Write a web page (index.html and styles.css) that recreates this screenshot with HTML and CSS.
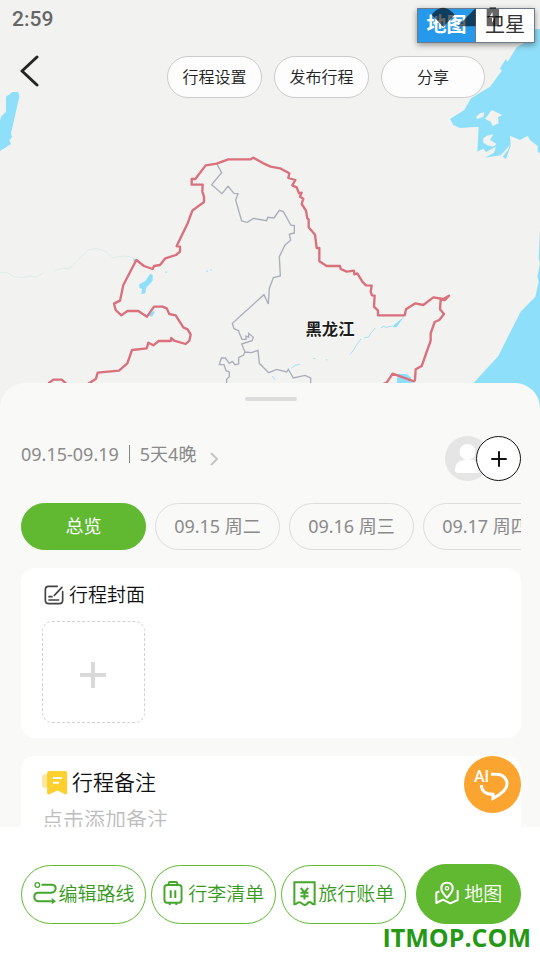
FILE: index.html
```html
<!DOCTYPE html>
<html lang="zh-CN">
<head>
    <meta charset="UTF-8">
    <meta name="viewport" content="width=device-width, initial-scale=1.0">
    <title>行程总览</title>
    <link rel="stylesheet" href="styles.css">
</head>
<body>
    <div class="app">
        <header class="map-area">
            <svg class="map" viewBox="0 0 1620 1230" preserveAspectRatio="xMidYMin slice" aria-hidden="true">
                <!-- water -->
                <g fill="#8edff9">
                    <path d="M18 290L38 276H55L58 290L33 400L36 412L28 420L33 432L0 453V360L5 348L18 335Z"/>
                    <path d="M1620 87L1600 88L1580 125L1550 142L1523 185L1517 178L1500 205L1505 213L1470 260L1413 295L1393 330L1350 357L1360 375L1380 384L1436 380L1432 455L1450 446L1458 456L1488 440L1482 458L1455 473L1502 466L1530 435L1524 450L1508 470L1518 477L1532 437L1530 407L1560 420L1583 407L1590 420L1613 438V455L1620 460Z"/>
                    <path d="M1620 690L1616 775L1620 790L1612 830L1616 845L1606 890L1562 935L1495 1068L1420 1150V1230H1620Z"/>
                    <path d="M418 853L436 843L450 822L458 824V842L438 864L436 880L424 882L426 866L418 864Z"/>
                    <path d="M445 946L460 932L464 938L456 950Z"/>
                    <path d="M400 773L408 780L401 788Z"/>
                    <path d="M1192 1122H1220L1232 1132L1240 1160H1190Z"/>
                    <path d="M1212 950L1190 981L1178 982L1182 974Z"/>
                </g>
                <g fill="#f2f2f0">
                    <path d="M1428 352L1440 340L1453 337L1450 350L1432 357Z"/>
                    <path d="M1455 357L1475 330L1507 345L1494 352L1496 370L1478 378L1472 365Z"/>
                    <path d="M1450 415L1460 407L1480 403L1470 420L1490 432L1480 440L1462 436L1450 428Z"/>
                </g>
                <!-- rivers -->
                <path class="river" d="M1178 978L1158 982L1150 979L1142 984M1126 984L1112 1000L1106 1011L1092 1014M1084 1016L1070 1034L1060 1052L1050 1063M940 1075L947 1076M978 1078L982 1080M900 1093L885 1096L874 1105M495 816L502 817M618 814L624 813M631 811L636 809M816 1128L826 1140"/>
                <path class="stream" d="M0 818L20 817L40 830L70 832L95 828L110 832L130 817M165 811L190 805H210L230 783L265 750L290 745L318 755L340 773L370 768L400 772"/>
                <!-- inner boundaries -->
                <path class="inner" d="M650 491L665 518L635 554L666 581L684 559L702 580L714 581L707 600L725 663L742 667L760 655L800 662L803 652L822 654L838 631L850 635L873 676H883V699L868 703L872 721L855 735L838 770L841 828L820 833L808 865L805 912L792 884L697 970L702 986L716 992L718 1000L726 1018H738V1008L746 1012V1000L760 1012L756 1022L725 1032L735 1056L730 1066L716 1072V1092L705 1094L697 1084L688 1090L676 1074H664L658 1094L672 1094L678 1112L688 1116V1130L680 1138V1170M735 1056L755 1058L774 1051L778 1090L806 1118L830 1108L860 1116L865 1108L880 1134L915 1126L932 1134V1170"/>
                <!-- border -->
                <path class="border" d="M145 1150L160 1139H185L198 1150M258 1156L288 1136L293 1118L357 1112L382 1090L396 1050L440 1045L445 1028L460 1036L476 1023H512L514 1014L522 1022L557 1032L568 1022L572 1004L563 988L550 982L527 946L508 942L500 925L488 920H462L441 950L415 933H382L364 946L347 930L342 911L360 902L370 855L409 780L432 798L458 807L462 798L480 795L496 775L528 765L540 755V740L530 738L563 670L577 632L612 606V590L607 575L608 554H575V537H586L617 496L650 491L685 478H752L760 473L790 490L812 500L840 505L868 520L865 534L886 540L877 556L890 562L897 580L905 578L900 590L910 596L905 612L918 632L922 655L926 658V682L945 704L950 744H958V784L980 798H1020L1022 807L1040 815L1062 812L1063 823L1072 820L1087 845L1098 856L1115 857L1112 875L1116 886L1124 887L1122 920L1134 932V946H1214L1218 928L1246 910L1270 915L1300 892L1330 897L1347 887L1335 900L1322 899L1320 928L1332 942L1318 960L1304 966L1292 1000V1022L1265 1098L1247 1108L1245 1140L1242 1144L1178 1121L1160 1148L1140 1156"/>
                <text class="province" x="990" y="1005" text-anchor="middle">黑龙江</text>
            </svg>

            <div class="status-bar">
                <span class="time">2:59</span>
                <div class="map-type">
                    <button type="button" class="active">地图</button>
                    <button type="button">卫星</button>
                    <svg class="status-icons" viewBox="0 0 204 60" aria-hidden="true">
                        <path d="M2 23Q36-19 71 23L37 60Z"/>
                        <path d="M80 58L134 3V58Z"/>
                        <path fill-rule="evenodd" d="M167 6H176V1H195V6H204V54Q204 58 200 58H171Q167 58 167 54ZM184 15L174 33H183V47L194 27H185Z"/>
                    </svg>
                </div>
            </div>

            <div class="toolbar">
                <button type="button" class="back" aria-label="返回">
                    <svg viewBox="0 0 20 32" width="20" height="32" aria-hidden="true"><path d="M17 2L2 16L17 30" fill="none" stroke="#252525" stroke-width="3" stroke-linecap="round" stroke-linejoin="round"/></svg>
                </button>
                <div class="actions">
                    <button type="button">行程设置</button>
                    <button type="button">发布行程</button>
                    <button type="button" class="share">分享</button>
                </div>
            </div>
        </header>

        <main class="sheet">
            <div class="handle"></div>

            <div class="trip-row">
                <a href="#dates" class="trip-dates">
                    <span>09.15-09.19</span>
                    <span class="divider"></span>
                    <span>5天4晚</span>
                    <svg class="arrow" viewBox="0 0 8 14" width="8" height="14" aria-hidden="true"><path d="M1 1L7 7L1 13" fill="none" stroke="#c6c6c6" stroke-width="2"/></svg>
                </a>
                <div class="members">
                    <svg class="avatar" viewBox="0 0 45 45" aria-hidden="true">
                        <circle cx="22.5" cy="22.5" r="22.5" fill="#e5e5e5"/>
                        <circle cx="22.5" cy="16" r="8" fill="#fff"/>
                        <path d="M10 34C10 27 15 24 19 24H26C31 24 35 28 35 34Q35 37 32 37H13Q10 37 10 34Z" fill="#fff"/>
                    </svg>
                    <button type="button" class="add-member" aria-label="添加成员">
                        <svg viewBox="0 0 16 16" width="16" height="16" aria-hidden="true"><path d="M8 1V15M1 8H15" stroke="#111" stroke-width="2" stroke-linecap="round"/></svg>
                    </button>
                </div>
            </div>

            <nav class="days">
                <button type="button" class="active">总览</button>
                <button type="button">09.15 周二</button>
                <button type="button">09.16 周三</button>
                <button type="button">09.17 周四</button>
            </nav>

            <section class="card">
                <h2 class="cover-title">
                    <svg viewBox="0 0 60 60" width="20" height="20" aria-hidden="true"><path d="M40 4H14Q4 4 4 14V46Q4 56 14 56H46Q56 56 56 46V20M31 31L54 7M15 35H24M15 45H44" fill="none" stroke="#444" stroke-width="5" stroke-linecap="round"/></svg>
                    行程封面
                </h2>
                <button type="button" class="upload" aria-label="添加封面">
                    <svg viewBox="0 0 26 26" width="26" height="26" aria-hidden="true"><path d="M13 0V26M0 13H26" stroke="#d9d9d9" stroke-width="4"/></svg>
                </button>
            </section>

            <section class="card notes">
                <h2 class="notes-title">
                    <svg viewBox="0 0 78 76" width="26" height="25" aria-hidden="true">
                        <path d="M6 14H20V54H6Q0 54 0 48V20Q0 14 6 14Z" fill="#fbe69a"/>
                        <path d="M22 3H70Q76 3 76 9V69Q76 77 68 73L46 62L24 73Q15 77 15 69V10Q15 3 22 3Z" fill="#fbd02f"/>
                        <path d="M35 24H58M35 39H49" stroke="#fff" stroke-width="6" stroke-linecap="round"/>
                    </svg>
                    <label for="note">行程备注</label>
                </h2>
                <textarea id="note" rows="2" placeholder="点击添加备注"></textarea>
            </section>

            <button type="button" class="ai-button" aria-label="AI助手">
                <svg viewBox="0 0 171 171" aria-hidden="true">
                    <path d="M81 55H97C117 55 129 68 129 84C129 101 115 113 87 127V115C64 115 52 104 52 87" fill="none" stroke="#fff" stroke-width="9"/>
                    <text x="30" y="78">AI</text>
                </svg>
            </button>
        </main>

        <footer class="bottom-bar">
            <nav class="bottom-nav">
                <button type="button">
                    <svg viewBox="0 0 72 72" width="24" height="24" aria-hidden="true">
                        <circle cx="13" cy="12" r="7" fill="none" stroke="#45a72c" stroke-width="4"/>
                        <path d="M28 11H56Q68 11 68 22T56 35H16Q4 35 4 47T16 61H54" fill="none" stroke="#45a72c" stroke-width="6" stroke-linecap="round"/>
                        <path d="M56 51L69 61L56 70Z" fill="#45a72c"/>
                    </svg>
                    编辑路线
                </button>
                <button type="button" class="luggage">
                    <svg viewBox="0 0 60 76" width="20" height="25" aria-hidden="true"><path d="M12 12H48Q56 12 56 20V57Q56 66 48 66H12Q4 66 4 57V20Q4 12 12 12ZM17 12V7Q17 3 21 3H39Q43 3 43 7V12M23 28V52M37 28V52M20 66V73M40 66V73" fill="none" stroke="#45a72c" stroke-width="6"/></svg>
                    行李清单
                </button>
                <button type="button">
                    <svg viewBox="0 0 68 74" width="23" height="25" aria-hidden="true"><path d="M4 4H64V69Q57 69 54 64Q46 60 41 68Q34 74 27 67Q20 60 13 65Q10 69 4 69ZM23 20L34 34L45 20M34 34V55M22 35H46M22 45H46" fill="none" stroke="#45a72c" stroke-width="6"/></svg>
                    旅行账单
                </button>
                <button type="button" class="active">
                    <svg viewBox="0 0 72 70" width="24" height="24" aria-hidden="true"><path d="M36 49Q19 33 19 21Q19 4 36 4Q53 4 53 21Q53 33 36 49ZM13 30L4 34V65L24 55L46 66L68 56V26" fill="none" stroke="#fff" stroke-width="6" stroke-linejoin="round"/><circle cx="36" cy="21" r="5" fill="none" stroke="#fff" stroke-width="4"/></svg>
                    地图
                </button>
            </nav>
            <div class="site-name">ITMOP.COM</div>
        </footer>
    </div>
</body>
</html>
```
FILE: styles.css
```css
* {
    box-sizing: border-box;
}

body {
    margin: 0;
    font-family: "Noto Sans", "Noto Sans CJK SC", sans-serif;
    color: #222;
    background-color: #fff;
}

button {
    font-family: inherit;
    margin: 0;
    padding: 0;
    border: none;
    background: none;
    color: inherit;
    white-space: nowrap;
    cursor: pointer;
}

svg {
    display: block;
    flex-shrink: 0;
}

.app {
    display: flex;
    flex-direction: column;
    height: 100vh;
}

/* map */
.map-area {
    position: relative;
    flex: 0 0 410px;
    background-color: #f2f2f0;
}

.map {
    position: absolute;
    inset: 0;
    width: 100%;
    height: 100%;
}

.border {
    fill: none;
    stroke: #d9707c;
    stroke-width: 7;
    stroke-linejoin: round;
}

.inner {
    fill: none;
    stroke: #a9aebb;
    stroke-width: 4;
}

.river {
    fill: none;
    stroke: #a5e1f3;
    stroke-width: 3;
}

.stream {
    fill: none;
    stroke: #dfebea;
    stroke-width: 3;
}

.province {
    font-size: 49px;
    font-weight: bold;
    fill: #1c1c1c;
    stroke: #fff;
    stroke-width: 4;
    paint-order: stroke;
}

.status-bar {
    position: relative;
    display: flex;
    justify-content: space-between;
    align-items: flex-start;
    padding: 8px 5px 0 12px;
}

.time {
    font-family: Roboto, sans-serif;
    font-size: 21px;
    line-height: 22px;
    font-weight: 500;
    color: #666;
}

.map-type {
    position: relative;
    display: flex;
    border: 1px solid #6e7a8a;
    background-color: #fff;
    box-shadow: 0 2px 6px rgba(0, 0, 0, 0.4);
}

.map-type button {
    width: 58px;
    height: 33px;
    padding-bottom: 2px;
    font-size: 20px;
    line-height: 30px;
    color: #333;
}

.map-type .active {
    background-color: #2699ea;
    border-right: 1px solid #6e7a8a;
    color: #fff;
    font-weight: bold;
}

.status-icons {
    position: absolute;
    top: -2px;
    left: 13px;
    width: 68px;
    height: 20px;
    fill: rgba(0, 0, 0, 0.6);
    pointer-events: none;
}

.toolbar {
    position: relative;
    display: flex;
    justify-content: space-between;
    align-items: center;
    padding: 12px 55px 0 20px;
}

.back {
    padding-bottom: 12px;
}

.actions {
    display: flex;
    gap: 12px;
}

.actions button {
    min-width: 95px;
    height: 42px;
    padding: 0 14px 2px;
    border: 1px solid #ccc;
    border-radius: 21px;
    background-color: #fdfdfd;
    font-size: 16px;
    font-weight: 350;
    color: #222;
}

.actions .share {
    padding: 0 35px 2px;
}

/* sheet */
.sheet {
    position: relative;
    flex: 1;
    min-height: 0;
    margin-top: -27px;
    padding: 14px 19px 0 21px;
    border-radius: 25px 25px 0 0;
    background-color: #f9f9f8;
    overflow: hidden;
}

.handle {
    width: 52px;
    height: 4px;
    margin: 0 auto;
    border-radius: 2px;
    background-color: #ddd;
}

.trip-row {
    display: flex;
    justify-content: space-between;
    align-items: center;
    margin-top: 35px;
}

.trip-dates {
    display: flex;
    align-items: center;
    padding-bottom: 10px;
    font-size: 18px;
    line-height: 24px;
    color: #8a8a8a;
    text-decoration: none;
}

.divider {
    width: 1px;
    height: 18px;
    margin: 0 10px;
    background-color: #8a8a8a;
}

.arrow {
    margin: 10px 0 0 14px;
}

.members {
    display: flex;
}

.avatar {
    width: 45px;
    height: 45px;
}

.add-member {
    position: relative;
    display: grid;
    place-items: center;
    width: 45px;
    height: 45px;
    margin-left: -14px;
    border: 1px solid #111;
    border-radius: 50%;
    background-color: #fff;
}

.days {
    display: flex;
    gap: 9px;
    margin-top: 22px;
    overflow-x: auto;
    scrollbar-width: none;
}

.days button {
    flex: 0 0 125px;
    height: 47px;
    padding-bottom: 4px;
    border: 1px solid #ddd;
    border-radius: 24px;
    font-size: 18px;
    color: #8a8a8a;
}

.days .active {
    border-color: #60b931;
    background-color: #60b931;
    color: #fff;
}

.card {
    margin-top: 18px;
    padding: 12px 21px 15px;
    border-radius: 14px;
    background-color: #fff;
}

.card h2 {
    display: flex;
    align-items: center;
    margin: 0;
    font-weight: 350;
    line-height: 28px;
    color: #111;
}

.cover-title {
    gap: 5px;
    padding: 1px 0 0 2px;
    font-size: 19px;
}

.upload {
    display: grid;
    place-items: center;
    width: 103px;
    height: 102px;
    margin-top: 12px;
    padding: 5px 1px 0 0;
    border: 1px dashed #d2d2d2;
    border-radius: 10px;
}

.notes-title {
    gap: 4px;
    font-size: 21px;
}

.notes textarea {
    display: block;
    width: 100%;
    margin-top: 8px;
    padding: 0;
    border: none;
    outline: none;
    resize: none;
    font-family: inherit;
    font-size: 21px;
    font-weight: 350;
    line-height: 30px;
    color: #222;
}

.notes textarea::placeholder {
    color: #bdbdbd;
}

.ai-button {
    position: absolute;
    right: 19px;
    bottom: 14px;
    width: 57px;
    height: 57px;
    border-radius: 50%;
    background-color: #fba42f;
}

.ai-button text {
    font-family: Roboto, sans-serif;
    font-size: 48px;
    font-weight: 500;
    fill: #fff;
}

/* bottom bar */
.bottom-bar {
    flex-shrink: 0;
    padding: 37px 9px 10px 21px;
    background-color: #fff;
}

.bottom-nav {
    display: flex;
    align-items: center;
    gap: 5px;
    padding-right: 10px;
}

.bottom-nav button {
    display: flex;
    flex: 6 1 0;
    align-items: center;
    justify-content: center;
    gap: 2px;
    height: 59px;
    padding-bottom: 2px;
    border: 1px solid #60b931;
    border-radius: 30px;
    font-size: 19px;
    font-weight: 350;
    color: #379a1e;
}

.bottom-nav .luggage {
    gap: 5px;
}

.bottom-nav .active {
    flex-grow: 5;
    gap: 5px;
    height: 60px;
    margin-left: 5px;
    background-color: #60b931;
    color: #fff;
}

.site-name {
    font-family: "Open Sans", sans-serif;
    font-size: 25px;
    line-height: 26px;
    font-weight: bold;
    text-align: right;
    color: #259816;
}
```
